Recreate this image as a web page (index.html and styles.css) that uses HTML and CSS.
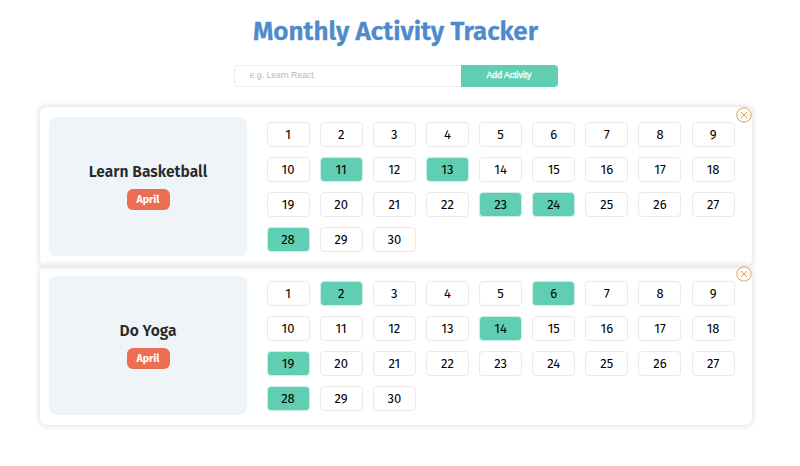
FILE: index.html
```html
<!DOCTYPE html>
<html lang="en">
<head>
<meta charset="utf-8">
<title>Monthly Activity Tracker</title>
<link rel="stylesheet" href="styles.css">
</head>
<body>
<h1 class="title">Monthly Activity Tracker</h1>
<form class="add-form">
  <input class="add-input" type="text" placeholder="e.g. Learn React">
  <button class="add-button" type="button">Add Activity</button>
</form>
<main class="activities" id="activities"></main>
<script src="script.js"></script>
</body>
</html>
```
FILE: styles.css
```css
* { box-sizing: border-box; }
body {
  margin: 0;
  min-height: 466px;
  background: #fff;
  color: #000;
  font-family: "Fira Sans", "Noto Sans", sans-serif;
}
.title {
  margin: 0;
  padding-top: 14px;
  padding-right: 9px;
  height: 65px;
  line-height: 36px;
  text-align: center;
  font-size: 26px;
  font-weight: 600;
  -webkit-text-stroke: .4px #4f8acb;
  color: #4f8acb;
}
.add-form {
  display: flex;
  width: 324px;
  height: 21.5px;
  margin-left: 233.5px;
}
.add-input {
  width: 227px;
  padding: 0 15px 1px;
  border: 1px solid #ececee;
  border-right: 0;
  border-radius: 4px 0 0 4px;
  font: 8.7px "Liberation Sans", sans-serif;
  outline: none;
}
.add-input::placeholder { color: #b9b9b9; }
.add-button {
  flex: 1;
  padding: 0 0 1px;
  border: 0;
  border-radius: 0 4px 4px 0;
  background: #60ceb3;
  color: #fff;
  font: 8.7px "Liberation Sans", sans-serif;
  -webkit-text-stroke: .3px #fff;
}
.activities {
  width: 712px;
  margin: 20.5px 0 0 40px;
}
.card {
  position: relative;
  display: flex;
  height: 159px;
  padding: 10px 17px 10px 9px;
  border-radius: 7px;
  box-shadow: 0 0 6px 1px #e6dede;
}
.label {
  display: flex;
  flex-direction: column;
  align-items: center;
  width: 198px;
  padding-top: 43.5px;
  border-radius: 7px;
  background: #eff4f9;
}
.name {
  margin: 0;
  font-size: 15.6px;
  line-height: 22px;
  font-weight: 600;
  color: #292929;
}
.month {
  width: 43px;
  height: 21px;
  margin-top: 6.5px;
  border-radius: 6px;
  background: #ec6e52;
  color: #fff;
  font-size: 10.6px;
  line-height: 21px;
  font-weight: 700;
  text-align: center;
}
.days {
  display: grid;
  grid-template-columns: repeat(9, 43px);
  grid-auto-rows: 25px;
  gap: 10px 10.15px;
  margin: 5px 0 0 19.5px;
}
.day {
  border: 1px solid #ece9ea;
  border-radius: 4px;
  font-size: 13px;
  line-height: 23px;
  text-align: center;
}
.day.done {
  background: #60ceb3;
  border-color: #cdeee6;
}
.remove {
  position: absolute;
  top: 0;
  right: 0;
  display: block;
  width: 16px;
  height: 16px;
}
```
FILE: script.js
```js
const activities = [
  { name: "Learn Basketball", done: [11, 13, 23, 24, 28] },
  { name: "Do Yoga", done: [2, 6, 14, 19, 28] }
];

document.getElementById("activities").innerHTML = activities.map(({ name, done }) => `
  <section class="card">
    <div class="label">
      <h2 class="name">${name}</h2>
      <div class="month">April</div>
    </div>
    <div class="days">
      ${Array.from({ length: 30 }, (_, i) => i + 1)
        .map(d => `<div class="day${done.includes(d) ? " done" : ""}">${d}</div>`).join("")}
    </div>
    <svg class="remove" viewBox="0 0 16 16" fill="none" stroke="#e49a4d">
      <circle cx="8" cy="8" r="7.2" fill="#fff"/>
      <path d="M4.9 4.9l6.2 6.2M11.1 4.9l-6.2 6.2"/>
    </svg>
  </section>`).join("");
```
